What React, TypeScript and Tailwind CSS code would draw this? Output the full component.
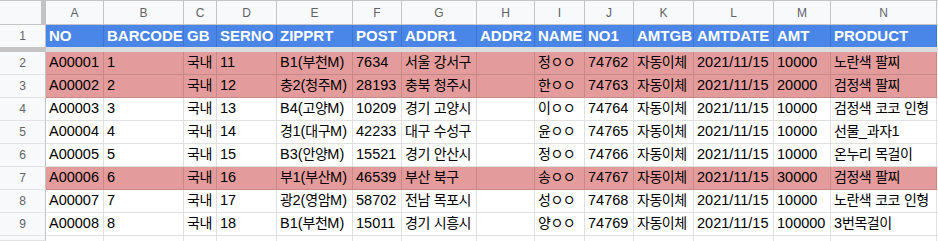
const COLS = ["A", "B", "C", "D", "E", "F", "G", "H", "I", "J", "K", "L", "M", "N"];

const HEAD = ["NO", "BARCODE", "GB", "SERNO", "ZIPPRT", "POST", "ADDR1", "ADDR2", "NAME", "NO1", "AMTGB", "AMTDATE", "AMT", "PRODUCT"];

type Row = { cells: string[]; hl?: boolean };

const ROWS: Row[] = [
  { hl: true, cells: ["A00001", "1", "국내", "11", "B1(부천M)", "7634", "서울 강서구", "", "정ㅇㅇ", "74762", "자동이체", "2021/11/15", "10000", "노란색 팔찌"] },
  { hl: true, cells: ["A00002", "2", "국내", "12", "충2(청주M)", "28193", "충북 청주시", "", "한ㅇㅇ", "74763", "자동이체", "2021/11/15", "20000", "검정색 팔찌"] },
  { cells: ["A00003", "3", "국내", "13", "B4(고양M)", "10209", "경기 고양시", "", "이ㅇㅇ", "74764", "자동이체", "2021/11/15", "10000", "검정색 코코 인형"] },
  { cells: ["A00004", "4", "국내", "14", "경1(대구M)", "42233", "대구 수성구", "", "윤ㅇㅇ", "74765", "자동이체", "2021/11/15", "10000", "선물_과자1"] },
  { cells: ["A00005", "5", "국내", "15", "B3(안양M)", "15521", "경기 안산시", "", "정ㅇㅇ", "74766", "자동이체", "2021/11/15", "10000", "온누리 목걸이"] },
  { hl: true, cells: ["A00006", "6", "국내", "16", "부1(부산M)", "46539", "부산 북구", "", "송ㅇㅇ", "74767", "자동이체", "2021/11/15", "30000", "검정색 팔찌"] },
  { cells: ["A00007", "7", "국내", "17", "광2(영암M)", "58702", "전남 목포시", "", "성ㅇㅇ", "74768", "자동이체", "2021/11/15", "10000", "노란색 코코 인형"] },
  { cells: ["A00008", "8", "국내", "18", "B1(부천M)", "15011", "경기 시흥시", "", "양ㅇㅇ", "74769", "자동이체", "2021/11/15", "100000", "3번목걸이"] },
];

const HANGUL = /([\u3131-\u318e\uac00-\ud7a3]+)/;

// hangul runs get a slightly narrower setting so widths line up with the sheet
const Txt = ({ s }: { s: string }) => (
  <span>
    {s.split(HANGUL).map((p, i) =>
      HANGUL.test(p) ? (
        <span key={i} className="text-[14px] tracking-[-0.5px]">
          {p}
        </span>
      ) : (
        p
      )
    )}
  </span>
);

const RowHead = ({ n, h }: { n?: number; h: string }) => (
  <div className={`${h} flex items-center justify-center bg-[#f8f9fa] border-r border-b border-r-[#c0c0c0] border-b-[#e2e2e2] text-[12px] text-[#5f6368]`}>
    {n}
  </div>
);

export default function App() {
  return (
    <div className="w-[938px] h-[241px] overflow-hidden bg-white font-['Liberation_Sans','Noto_Sans_CJK_KR',sans-serif]">
      <div className="grid grid-cols-[46px_58px_80px_33px_60px_76px_49px_75px_58px_50px_49px_60px_80px_57px_106px_1fr] border-t border-[#c4c4c4]">
        {/* column letters */}
        <div className="h-[24px] bg-[#f8f9fa] border-r-[5px] border-b border-r-[#c4c4c4] border-b-[#c4c4c4]" />
        {COLS.map((c) => (
          <div key={c} className="h-[24px] flex items-center justify-center bg-[#f8f9fa] border-r border-b border-[#c4c4c4] text-[12px] text-[#5f6368]">
            {c}
          </div>
        ))}
        <div className="h-[24px] bg-[#f8f9fa] border-b border-[#c4c4c4]" />

        {/* header row */}
        <div className="h-[22px] flex items-center justify-center bg-[#f8f9fa] border-r border-[#c0c0c0] text-[12px] text-[#5f6368]">1</div>
        {HEAD.map((t) => (
          <div key={t} className="h-[22px] flex items-center pl-[3px] bg-[#4a86e8] border-r border-[rgba(0,0,0,0.12)] text-white font-bold text-[15px] whitespace-nowrap overflow-hidden">
            {t}
          </div>
        ))}
        <div className="h-[22px]" />

        {/* frozen row bar */}
        <div className="h-[5px] bg-[#c4c4c4]" />
        <div className="col-span-15 h-[5px] bg-[#dadce0]" />

        {ROWS.map((r, i) => (
          <div key={i} className="contents">
            <RowHead n={i + 2} h="h-[23px]" />
            {r.cells.map((c, j) => (
              <div
                key={j}
                className={`h-[23px] flex items-center pl-[3px] border-r border-b border-[rgba(0,0,0,0.12)] text-[14.5px] text-black whitespace-nowrap overflow-hidden ${r.hl ? "bg-[#e39c9b]" : "bg-white"}`}
              >
                <Txt s={c} />
              </div>
            ))}
            <div className="h-[23px] border-b border-[#e2e2e2]" />
          </div>
        ))}

        {/* row 10, cut off */}
        <RowHead h="h-[5px]" />
        {COLS.map((c) => (
          <div key={c} className="h-[5px] border-r border-[rgba(0,0,0,0.12)]" />
        ))}
        <div className="h-[5px]" />
      </div>
    </div>
  );
}
